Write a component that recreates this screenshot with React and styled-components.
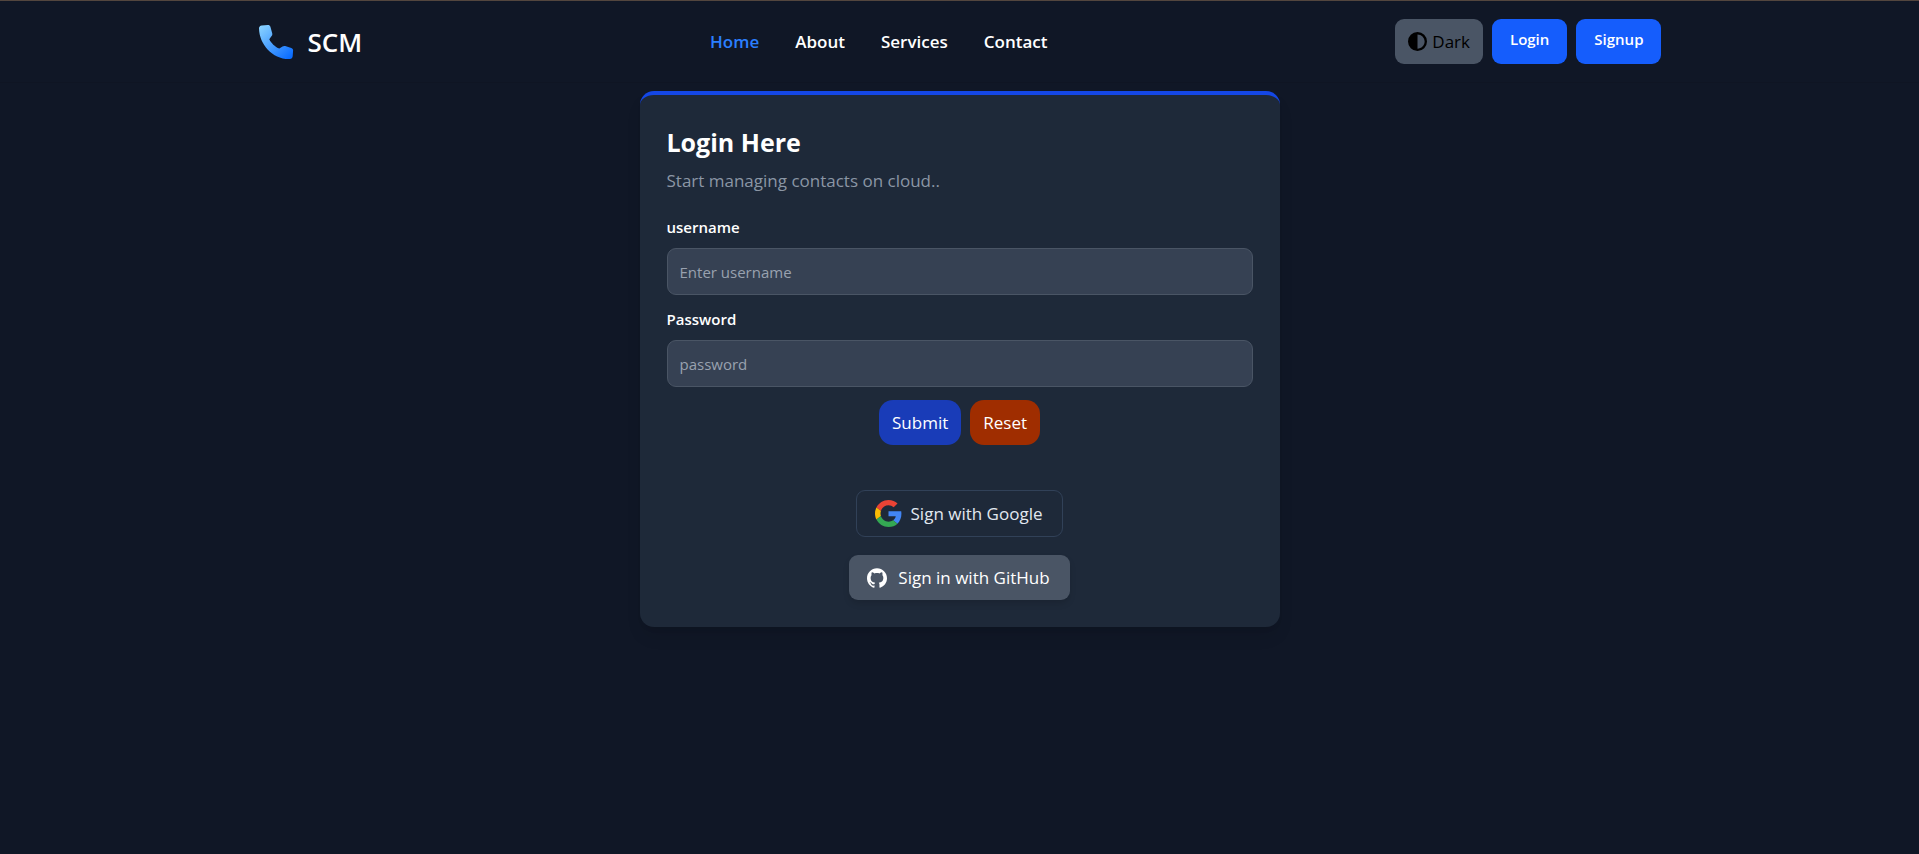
import styled, { createGlobalStyle } from "styled-components"

const GlobalStyle = createGlobalStyle`
  * {
    box-sizing: border-box;
  }
  body {
    margin: 0;
    min-height: 100vh;
    background: #101726;
    border-top: 1px solid #53463e;
    color: #fff;
    font-family: "Segoe UI", "Open Sans", "Noto Sans", sans-serif;
    font-size: 17px;
    line-height: 27px;
  }
  button, input {
    font: inherit;
    color: inherit;
  }
  a {
    color: inherit;
    text-decoration: none;
  }
  h1, p {
    margin: 0;
  }
`

const Header = styled.header`
  border-bottom: 1px solid #0f1523;
`

const HeaderInner = styled.div`
  display: flex;
  flex-wrap: wrap;
  align-items: center;
  justify-content: space-between;
  gap: 12px;
  max-width: 1440px;
  margin: 0 auto;
  padding: 18px;
`

const Brand = styled.a`
  display: flex;
  align-items: center;
  gap: 14px;
  font-size: 26px;
  font-weight: 600;
  line-height: 36px;
  svg {
    width: 36px;
    height: 36px;
  }
`

const Nav = styled.nav`
  display: flex;
  flex-wrap: wrap;
  gap: 36px;
`

const NavLink = styled.a`
  font-weight: 600;
  color: ${(props) => (props.$active ? "#2b7fff" : "#fff")};
`

const Actions = styled.div`
  display: flex;
  gap: 9px;
`

const ThemeButton = styled.button`
  display: flex;
  align-items: center;
  gap: 5px;
  padding: 9px 13px;
  border: 0;
  border-radius: 9px;
  background: #4a5565;
  color: #000;
  cursor: pointer;
  svg {
    width: 19px;
    height: 19px;
  }
`

const ActionLink = styled.a`
  padding: 9px 18px 13px;
  border-radius: 9px;
  background: #155dfc;
  font-size: 15px;
  font-weight: 600;
  line-height: 23px;
`

const Main = styled.main`
  display: flex;
  justify-content: center;
  padding-top: 8px;
`

const Card = styled.section`
  width: 100%;
  max-width: 640px;
  padding: 27px;
  border-top: 4px solid #1447e6;
  border-radius: 14px;
  background: #1e2939;
  box-shadow: 0 11px 17px -3px rgba(0, 0, 0, 0.1), 0 4px 7px -4px rgba(0, 0, 0, 0.1);
`

const Title = styled.h1`
  font-size: 25px;
  font-weight: 700;
  line-height: 40px;
`

const Subtitle = styled.p`
  padding-top: 5px;
  color: #8b96a5;
`

const Form = styled.form`
  display: flex;
  flex-direction: column;
  padding-top: 22px;
`

const Label = styled.label`
  margin-bottom: 10px;
  font-size: 15px;
  font-weight: 600;
  line-height: 22px;
`

const Input = styled.input`
  width: 100%;
  height: 47px;
  margin-bottom: 13px;
  padding: 0 12px;
  border: 1px solid #4a5565;
  border-radius: 9px;
  background: #364153;
  font-size: 15px;
  &::placeholder {
    color: #99a1af;
    opacity: 1;
  }
`

const FormButtons = styled.div`
  display: flex;
  justify-content: center;
  gap: 9px;
`

const FormButton = styled.button`
  padding: 9px 13px;
  border: 0;
  border-radius: 14px;
  background: ${(props) => props.$color};
  cursor: pointer;
`

const Socials = styled.div`
  display: flex;
  flex-direction: column;
  align-items: center;
  gap: 18px;
  padding-top: 45px;
`

const SocialButton = styled.button`
  display: flex;
  align-items: center;
  gap: ${(props) => (props.$filled ? "11px" : "9px")};
  padding: 9px 20px 9px 18px;
  border: ${(props) => (props.$filled ? "0" : "1px solid #314158")};
  border-radius: 9px;
  background: ${(props) => (props.$filled ? "#4a5565" : "transparent")};
  box-shadow: ${(props) => (props.$filled ? "0 4px 7px -1px rgba(0, 0, 0, 0.15)" : "none")};
  color: ${(props) => (props.$filled ? "#fff" : "#e2e8f0")};
  cursor: pointer;
`

function PhoneIcon() {
  return (
    <svg viewBox="0 0 36 36" aria-hidden="true">
      <defs>
        <linearGradient id="phone" x1="3" y1="1" x2="32" y2="34" gradientUnits="userSpaceOnUse">
          <stop offset="0" stopColor="#8ad3ff" />
          <stop offset="1" stopColor="#0a6cff" />
        </linearGradient>
      </defs>
      <path
        fill="url(#phone)"
        d="M3.6 1.4 9.8 1c1.2-.1 2.2.6 2.6 1.7l1.8 6.5c.3 1 .1 2-.6 2.8l-2.3 3.2c1.7 3.7 5.6 7.6 10.1 9.4l3.1-2c.8-.6 1.8-.7 2.7-.5l6.1 1.8c1.2.4 1.9 1.4 1.8 2.6l-.4 5.8c-.1 1.5-1.3 2.7-2.8 2.7C15.3 35.8 1.2 20.8 1 4.200c0-1.500 1.100-2.700 2.600-2.800z"
      />
    </svg>
  )
}

function ContrastIcon() {
  return (
    <svg viewBox="0 0 512 512" fill="currentColor" aria-hidden="true">
      <path d="M448 256c0-106-86-192-192-192v384c106 0 192-86 192-192zM0 256a256 256 0 1 1 512 0 256 256 0 1 1-512 0z" />
    </svg>
  )
}

function GoogleIcon() {
  return (
    <svg width="27" height="27" viewBox="0 0 48 48" aria-hidden="true">
      <path fill="#EA4335" d="M24 9.500c3.540 0 6.710 1.220 9.210 3.600l6.850-6.850C35.900 2.380 30.470 0 24 0 14.620 0 6.510 5.380 2.560 13.220l7.980 6.190C12.430 13.720 17.740 9.500 24 9.500z" />
      <path fill="#4285F4" d="M46.980 24.550c0-1.570-.15-3.090-.38-4.550H24v9.020h12.940c-.58 2.960-2.260 5.480-4.780 7.180l7.730 6c4.510-4.180 7.090-10.360 7.090-17.650z" />
      <path fill="#FBBC05" d="M10.530 28.590A14.500 14.500 0 0 1 9.770 24c0-1.600.27-3.140.76-4.590l-7.980-6.190A23.900 23.900 0 0 0 0 24c0 3.880.92 7.540 2.560 10.780l7.970-6.190z" />
      <path fill="#34A853" d="M24 48c6.480 0 11.930-2.130 15.890-5.810l-7.730-6c-2.150 1.450-4.920 2.300-8.160 2.300-6.260 0-11.570-4.220-13.470-9.910l-7.980 6.190C6.510 42.620 14.620 48 24 48z" />
    </svg>
  )
}

function GithubIcon() {
  return (
    <svg width="20" height="20" viewBox="0 0 24 24" fill="currentColor" aria-hidden="true">
      <path d="M12 .297c-6.630 0-12 5.373-12 12 0 5.303 3.438 9.800 8.205 11.385.6.113.82-.258.82-.577 0-.285-.01-1.040-.015-2.040-3.338.724-4.042-1.610-4.042-1.610C4.422 18.070 3.633 17.700 3.633 17.700c-1.087-.744.084-.729.084-.729 1.205.084 1.838 1.236 1.838 1.236 1.070 1.835 2.809 1.305 3.495.998.108-.776.417-1.305.76-1.605-2.665-.3-5.466-1.332-5.466-5.930 0-1.310.465-2.380 1.235-3.220-.135-.303-.54-1.523.105-3.176 0 0 1.005-.322 3.300 1.230.96-.267 1.980-.399 3-.405 1.020.006 2.040.138 3 .405 2.280-1.552 3.285-1.230 3.285-1.230.645 1.653.24 2.873.12 3.176.765.840 1.230 1.910 1.230 3.220 0 4.610-2.805 5.625-5.475 5.920.42.360.81 1.096.81 2.220 0 1.606-.015 2.896-.015 3.286 0 .315.210.690.825.570C20.565 22.092 24 17.592 24 12.297c0-6.627-5.373-12-12-12" />
    </svg>
  )
}

const links = ["Home", "About", "Services", "Contact"]

export default function App() {
  return (
    <>
      <GlobalStyle />
      <Header>
        <HeaderInner>
          <Brand href="#home">
            <PhoneIcon />
            <span>SCM</span>
          </Brand>
          <Nav>
            {links.map((link) => (
              <NavLink key={link} href={`#${link.toLowerCase()}`} $active={link === "Home"}>
                {link}
              </NavLink>
            ))}
          </Nav>
          <Actions>
            <ThemeButton type="button">
              <ContrastIcon />
              <span>Dark</span>
            </ThemeButton>
            <ActionLink href="#login">Login</ActionLink>
            <ActionLink href="#signup">Signup</ActionLink>
          </Actions>
        </HeaderInner>
      </Header>
      <Main>
        <Card>
          <Title>Login Here</Title>
          <Subtitle>Start managing contacts on cloud..</Subtitle>
          <Form onSubmit={(e) => e.preventDefault()}>
            <Label htmlFor="username">username</Label>
            <Input id="username" type="text" placeholder="Enter username" />
            <Label htmlFor="password">Password</Label>
            <Input id="password" type="password" placeholder="password" />
            <FormButtons>
              <FormButton type="submit" $color="#193cb8">Submit</FormButton>
              <FormButton type="reset" $color="#9f2d00">Reset</FormButton>
            </FormButtons>
          </Form>
          <Socials>
            <SocialButton type="button">
              <GoogleIcon />
              <span>Sign with Google</span>
            </SocialButton>
            <SocialButton type="button" $filled>
              <GithubIcon />
              <span>Sign in with GitHub</span>
            </SocialButton>
          </Socials>
        </Card>
      </Main>
    </>
  )
}
